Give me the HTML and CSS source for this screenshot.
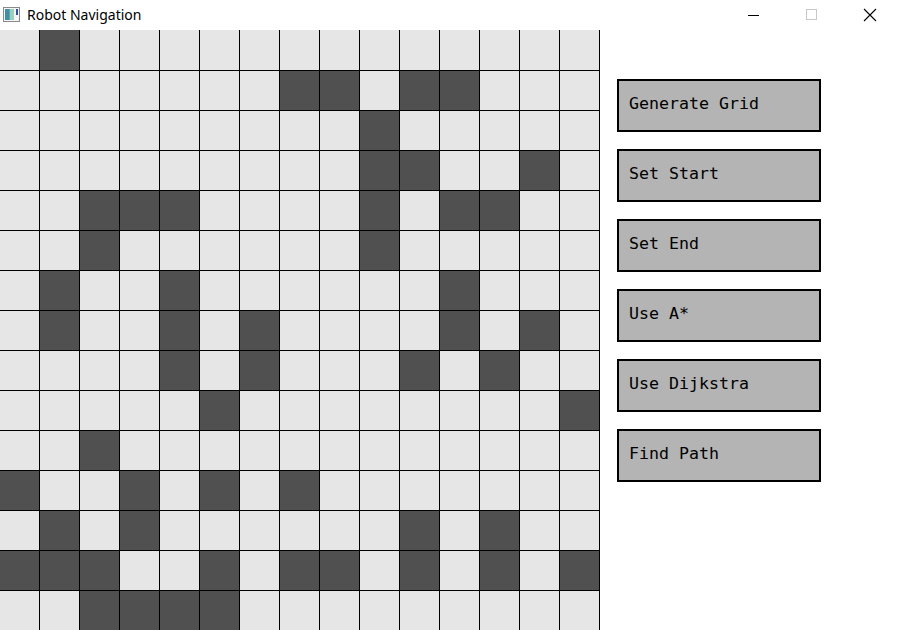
FILE: index.html
```html
<!DOCTYPE html>
<html>
<head>
<meta charset="utf-8">
<title>Robot Navigation</title>
<link rel="stylesheet" href="styles.css">
</head>
<body>
<div class="titlebar">
  <div class="title-left">
    <svg class="app-icon" width="18" height="16" viewBox="0 0 18 16">
      <rect x="0.5" y="0.5" width="16" height="14" fill="#f4f4f4" stroke="#8a8a8a"/>
      <rect x="2" y="2" width="9" height="11" fill="#5aa8a0"/>
      <rect x="2" y="2" width="4" height="11" fill="#3f8fa8"/>
      <rect x="7" y="2" width="4" height="11" fill="#9ccfc0"/>
      <rect x="13" y="2" width="2" height="6" fill="#2b4f9e"/>
    </svg>
    <span class="title-text">Robot Navigation</span>
  </div>
  <div class="win-controls">
    <div class="wc"><svg width="12" height="12" viewBox="0 0 12 12"><line x1="0" y1="6.5" x2="11" y2="6.5" stroke="#000" stroke-width="1"/></svg></div>
    <div class="wc"><svg width="12" height="12" viewBox="0 0 12 12"><rect x="0.5" y="0.5" width="10" height="10" fill="none" stroke="#c8c8c8" stroke-width="1"/></svg></div>
    <div class="wc"><svg width="14" height="14" viewBox="0 0 14 14"><path d="M1 1 L13 13 M13 1 L1 13" stroke="#000" stroke-width="1.1" fill="none"/></svg></div>
  </div>
</div>
<div class="main">
  <div class="grid">
    <div class="c"></div><div class="c d"></div><div class="c"></div><div class="c"></div><div class="c"></div><div class="c"></div><div class="c"></div><div class="c"></div><div class="c"></div><div class="c"></div><div class="c"></div><div class="c"></div><div class="c"></div><div class="c"></div><div class="c"></div>
    <div class="c"></div><div class="c"></div><div class="c"></div><div class="c"></div><div class="c"></div><div class="c"></div><div class="c"></div><div class="c d"></div><div class="c d"></div><div class="c"></div><div class="c d"></div><div class="c d"></div><div class="c"></div><div class="c"></div><div class="c"></div>
    <div class="c"></div><div class="c"></div><div class="c"></div><div class="c"></div><div class="c"></div><div class="c"></div><div class="c"></div><div class="c"></div><div class="c"></div><div class="c d"></div><div class="c"></div><div class="c"></div><div class="c"></div><div class="c"></div><div class="c"></div>
    <div class="c"></div><div class="c"></div><div class="c"></div><div class="c"></div><div class="c"></div><div class="c"></div><div class="c"></div><div class="c"></div><div class="c"></div><div class="c d"></div><div class="c d"></div><div class="c"></div><div class="c"></div><div class="c d"></div><div class="c"></div>
    <div class="c"></div><div class="c"></div><div class="c d"></div><div class="c d"></div><div class="c d"></div><div class="c"></div><div class="c"></div><div class="c"></div><div class="c"></div><div class="c d"></div><div class="c"></div><div class="c d"></div><div class="c d"></div><div class="c"></div><div class="c"></div>
    <div class="c"></div><div class="c"></div><div class="c d"></div><div class="c"></div><div class="c"></div><div class="c"></div><div class="c"></div><div class="c"></div><div class="c"></div><div class="c d"></div><div class="c"></div><div class="c"></div><div class="c"></div><div class="c"></div><div class="c"></div>
    <div class="c"></div><div class="c d"></div><div class="c"></div><div class="c"></div><div class="c d"></div><div class="c"></div><div class="c"></div><div class="c"></div><div class="c"></div><div class="c"></div><div class="c"></div><div class="c d"></div><div class="c"></div><div class="c"></div><div class="c"></div>
    <div class="c"></div><div class="c d"></div><div class="c"></div><div class="c"></div><div class="c d"></div><div class="c"></div><div class="c d"></div><div class="c"></div><div class="c"></div><div class="c"></div><div class="c"></div><div class="c d"></div><div class="c"></div><div class="c d"></div><div class="c"></div>
    <div class="c"></div><div class="c"></div><div class="c"></div><div class="c"></div><div class="c d"></div><div class="c"></div><div class="c d"></div><div class="c"></div><div class="c"></div><div class="c"></div><div class="c d"></div><div class="c"></div><div class="c d"></div><div class="c"></div><div class="c"></div>
    <div class="c"></div><div class="c"></div><div class="c"></div><div class="c"></div><div class="c"></div><div class="c d"></div><div class="c"></div><div class="c"></div><div class="c"></div><div class="c"></div><div class="c"></div><div class="c"></div><div class="c"></div><div class="c"></div><div class="c d"></div>
    <div class="c"></div><div class="c"></div><div class="c d"></div><div class="c"></div><div class="c"></div><div class="c"></div><div class="c"></div><div class="c"></div><div class="c"></div><div class="c"></div><div class="c"></div><div class="c"></div><div class="c"></div><div class="c"></div><div class="c"></div>
    <div class="c d"></div><div class="c"></div><div class="c"></div><div class="c d"></div><div class="c"></div><div class="c d"></div><div class="c"></div><div class="c d"></div><div class="c"></div><div class="c"></div><div class="c"></div><div class="c"></div><div class="c"></div><div class="c"></div><div class="c"></div>
    <div class="c"></div><div class="c d"></div><div class="c"></div><div class="c d"></div><div class="c"></div><div class="c"></div><div class="c"></div><div class="c"></div><div class="c"></div><div class="c"></div><div class="c d"></div><div class="c"></div><div class="c d"></div><div class="c"></div><div class="c"></div>
    <div class="c d"></div><div class="c d"></div><div class="c d"></div><div class="c"></div><div class="c"></div><div class="c d"></div><div class="c"></div><div class="c d"></div><div class="c d"></div><div class="c"></div><div class="c d"></div><div class="c"></div><div class="c d"></div><div class="c"></div><div class="c d"></div>
    <div class="c"></div><div class="c"></div><div class="c d"></div><div class="c d"></div><div class="c d"></div><div class="c d"></div><div class="c"></div><div class="c"></div><div class="c"></div><div class="c"></div><div class="c"></div><div class="c"></div><div class="c"></div><div class="c"></div><div class="c"></div>
  </div>
  <div class="sidebar">
    <div class="btn">Generate Grid</div>
    <div class="btn">Set Start</div>
    <div class="btn">Set End</div>
    <div class="btn">Use A*</div>
    <div class="btn">Use Dijkstra</div>
    <div class="btn">Find Path</div>
  </div>
</div>
</body>
</html>
```
FILE: styles.css
```css
html, body {
  margin: 0;
  padding: 0;
  background: #ffffff;
  overflow: hidden;
}

.titlebar {
  height: 30px;
  display: flex;
  justify-content: space-between;
  align-items: center;
  background: #ffffff;
}

.title-left {
  display: flex;
  align-items: center;
  padding-left: 3px;
}

.app-icon {
  display: block;
  margin-right: 6px;
}

.title-text {
  font-family: "Noto Sans", "Open Sans", sans-serif;
  font-size: 14px;
  color: #000;
  line-height: 30px;
}

.win-controls {
  display: flex;
  height: 30px;
}

.wc {
  width: 58px;
  display: flex;
  align-items: center;
  justify-content: center;
}

.main {
  display: flex;
  align-items: flex-start;
}

.grid {
  display: grid;
  grid-template-columns: repeat(15, 40px);
  grid-template-rows: repeat(15, 40px);
  width: 600px;
  flex: none;
}

.c {
  box-sizing: border-box;
  background: #e6e6e6;
  border-right: 1px solid #000;
}

.c:nth-child(n+16) {
  border-top: 1px solid #000;
}

.c.d {
  background: #505050;
}

.sidebar {
  display: flex;
  flex-direction: column;
  gap: 17px;
  padding-top: 49px;
  padding-left: 17px;
}

.btn {
  box-sizing: border-box;
  width: 204px;
  height: 53px;
  border: 2px solid #000;
  background: #b4b4b4;
  font-family: "DejaVu Sans Mono", "Liberation Mono", monospace;
  font-size: 16.6px;
  color: #000;
  padding-left: 10px;
  padding-bottom: 5px;
  display: flex;
  align-items: center;
  white-space: pre;
}
```
